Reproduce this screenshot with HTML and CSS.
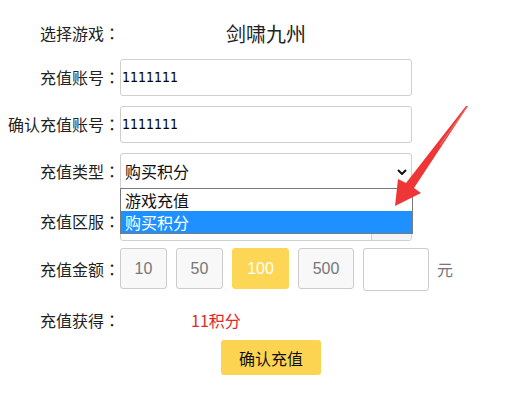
FILE: index.html
```html
<!DOCTYPE html>
<html lang="zh-CN">
<head>
<meta charset="utf-8">
<title>充值</title>
<link rel="stylesheet" href="styles.css">
</head>
<body>
<div class="form">
  <div class="row row-game">
    <span class="label">选择游戏<span class="colon" lang="ja">：</span></span>
    <div class="game">剑啸九州</div>
  </div>
  <div class="row">
    <label class="label">充值账号<span class="colon" lang="ja">：</span></label>
    <input class="text-input" type="text" value="1111111">
  </div>
  <div class="row">
    <label class="label">确认充值账号<span class="colon" lang="ja">：</span></label>
    <input class="text-input" type="text" value="1111111">
  </div>
  <div class="row row-select">
    <label class="label">充值类型<span class="colon" lang="ja">：</span></label>
    <div class="select">
      <span>购买积分</span>
      <svg class="chev" width="10" height="6" viewBox="0 0 10 6"><polyline points="1,1 5,5 9,1" fill="none" stroke="#111" stroke-width="2"/></svg>
    </div>
    <div class="dropdown">
      <div class="option">游戏充值</div>
      <div class="option selected">购买积分</div>
    </div>
  </div>
  <div class="row row-server">
    <label class="label">充值区服<span class="colon" lang="ja">：</span></label>
    <div class="server">
      <div class="server-main"></div>
      <div class="server-btn"></div>
    </div>
  </div>
  <div class="row row-amount">
    <label class="label">充值金额<span class="colon" lang="ja">：</span></label>
    <div class="amounts">
      <span class="amt">10</span>
      <span class="amt">50</span>
      <span class="amt active">100</span>
      <span class="amt">500</span>
      <input class="custom" type="text" value="">
      <span class="unit">元</span>
    </div>
  </div>
  <div class="row row-get">
    <span class="label">充值获得<span class="colon" lang="ja">：</span></span>
    <span class="points">11积分</span>
  </div>
  <div class="actions">
    <button class="submit" type="button">确认充值</button>
  </div>
</div>
<svg class="arrow" width="525" height="400" viewBox="0 0 525 400">
  <polygon points="468,106 414,188 421,193 395,206 398,179 406,183 466,106" fill="#ef3636"/>
  <polyline points="467,107 440,145" stroke="#f37a7a" stroke-width="1" fill="none"/>
</svg>
</body>
</html>
```
FILE: styles.css
```css
html, body {
  margin: 0;
  padding: 0;
  background: #fff;
}
body {
  font-family: "Noto Sans CJK SC", "Noto Sans", sans-serif;
  font-size: 16px;
  color: #222;
  position: relative;
  width: 525px;
  height: 400px;
  overflow: hidden;
}
.form {
  padding: 15px 0 0 8px;
}
.row {
  display: flex;
  align-items: center;
  height: 36px;
  margin-bottom: 11px;
}
.row-game {
  margin-bottom: 8px;
}
.label {
  width: 112px;
  flex: none;
  text-align: right;
  font-size: 16px;
  color: #222;
  white-space: nowrap;
}
.colon {
  font-family: "Noto Sans CJK JP", "Noto Sans CJK SC", sans-serif;
  display: inline-block;
  width: 16px;
  text-align: center;
}
.game {
  width: 292px;
  text-align: center;
  font-size: 20px;
  color: #222;
}
.text-input {
  box-sizing: border-box;
  width: 292px;
  height: 37px;
  margin: 0;
  padding: 0 1px;
  border: 1px solid #cfcfcf;
  border-radius: 3px;
  font-family: "DejaVu Sans Condensed", "DejaVu Sans", sans-serif;
  font-size: 14px;
  color: #000;
  outline: none;
}
.row-select {
  position: relative;
  margin-bottom: 12px;
}
.select {
  box-sizing: border-box;
  width: 292px;
  height: 36px;
  border: 1px solid #cfcfcf;
  border-radius: 3px;
  display: flex;
  align-items: center;
  justify-content: space-between;
  padding: 0 4px 0 4px;
  color: #111;
}
.chev {
  display: block;
  margin-top: 1px;
}
.dropdown {
  position: absolute;
  left: 112px;
  top: 35px;
  box-sizing: border-box;
  width: 293px;
  height: 46px;
  border: 1px solid #7a7a7a;
  background: #fff;
  z-index: 2;
}
.option {
  height: 22px;
  line-height: 22px;
  padding-left: 4px;
  color: #111;
}
.option.selected {
  height: 22px;
  background: #1e90ff;
  color: #fff;
}
.row-server {
  height: 40px;
  margin-bottom: 7px;
}
.server {
  box-sizing: border-box;
  width: 292px;
  height: 40px;
  border: 1px solid #cfcfcf;
  border-radius: 3px;
  display: flex;
  overflow: hidden;
}
.server-main {
  flex: 1;
}
.server-btn {
  width: 39px;
  border-left: 1px solid #cfcfcf;
  background: #f4f4f4;
}
.row-amount {
  height: 41px;
  margin-bottom: 13px;
}
.amounts {
  display: flex;
  align-items: flex-start;
  gap: 9px;
  height: 41px;
}
.amt {
  box-sizing: border-box;
  height: 41px;
  width: 47px;
  border: 1px solid #cccccc;
  border-radius: 3px;
  background: #f8f8f8;
  display: flex;
  align-items: center;
  justify-content: center;
  font-family: "Liberation Sans", Arial, sans-serif;
  font-size: 16px;
  color: #777;
}
.amt:nth-child(3) {
  width: 57px;
}
.amt:nth-child(4) {
  width: 56px;
}
.amt.active {
  background: #fdd655;
  border-color: #fdd655;
  color: #fff;
}
.custom {
  box-sizing: border-box;
  width: 66px;
  height: 43px;
  margin: 0;
  border: 1px solid #cccccc;
  border-radius: 3px;
  outline: none;
}
.unit {
  align-self: center;
  margin-left: -1px;
  color: #777;
  font-size: 16px;
}
.row-get {
  margin-bottom: 2px;
}
.points {
  padding-left: 71px;
  color: #e3262e;
  font-size: 16px;
}
.actions {
  padding-left: 213px;
}
.submit {
  width: 100px;
  height: 35px;
  border: none;
  border-radius: 3px;
  background: #fcd452;
  font-family: "Noto Sans CJK SC", sans-serif;
  font-size: 16px;
  color: #111;
  padding: 0;
}
.arrow {
  position: absolute;
  left: 0;
  top: 0;
  pointer-events: none;
  z-index: 5;
}
```
